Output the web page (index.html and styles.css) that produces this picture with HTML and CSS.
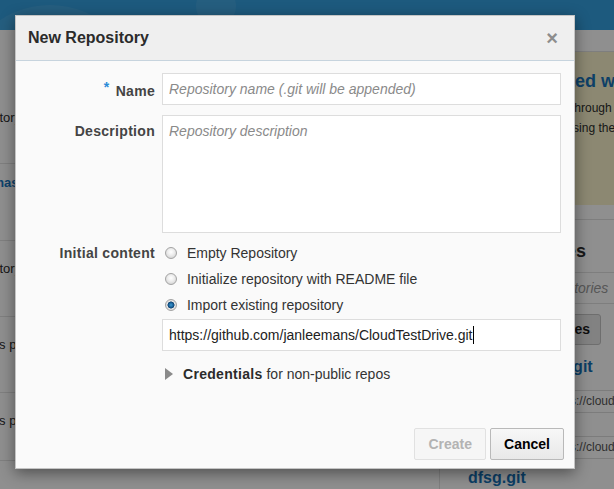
FILE: index.html
```html
<!DOCTYPE html>
<html lang="en">
<head>
<meta charset="utf-8">
<title>New Repository</title>
<link rel="stylesheet" href="styles.css">
</head>
<body>
<div class="page">
  <header class="topbar">
    <span class="bubble bubble-a"></span>
    <span class="bubble bubble-b"></span>
  </header>
  <main class="content">
    <section class="list">
      <div class="list-row row-1"><span class="row-text shift-a">Repository for the demo</span></div>
      <div class="list-row row-2"><span class="row-link shift-b">Christmas app</span></div>
      <div class="list-row row-3"><span class="row-text shift-a">Repository of samples</span></div>
      <div class="list-row row-4"><span class="row-text shift-c">This project holds code</span></div>
      <div class="list-row row-5"><span class="row-text shift-c">This project holds code</span></div>
      <div class="list-row row-6"></div>
    </section>
    <aside class="side">
      <div class="side-top"></div>
      <div class="welcome">
        <h2 class="welcome-title">Get started with Git</h2>
        <p class="welcome-text">Click to walk through the steps<br>repositories using the wizard</p>
      </div>
      <div class="side-gap"></div>
      <h3 class="side-heading">Repositories</h3>
      <div class="side-search">Filter repositories</div>
      <div class="side-actions"><span class="side-button">Repositories</span></div>
      <div class="repo">
        <div class="repo-name name-1">demo.git</div>
        <div class="repo-url url-1">https://cloud.oracle.com/demo.git</div>
      </div>
      <div class="repo">
        <div class="repo-name name-2">a.git</div>
        <div class="repo-url url-2">https://cloud.oracle.com/a.git</div>
      </div>
      <div class="repo">
        <div class="repo-name name-3">dfsg.git</div>
      </div>
    </aside>
  </main>
</div>

<div class="backdrop"></div>

<div class="dialog" role="dialog" aria-labelledby="dlg-title">
  <div class="dlg-head">
    <h1 class="dlg-title" id="dlg-title">New Repository</h1>
    <span class="dlg-close">&times;</span>
  </div>
  <form class="dlg-body">
    <label class="field-label label-center" for="repo-name"><span class="req">*</span> Name</label>
    <input class="text-input" id="repo-name" type="text" placeholder="Repository name (.git will be appended)">

    <label class="field-label label-top" for="repo-desc">Description</label>
    <textarea class="text-area" id="repo-desc" placeholder="Repository description"></textarea>

    <div class="field-label label-init">Initial content</div>
    <div class="options">
      <label class="option"><input class="radio" type="radio" name="init"> Empty Repository</label>
      <label class="option"><input class="radio" type="radio" name="init"> Initialize repository with README file</label>
      <label class="option option-last"><input class="radio" type="radio" name="init" checked> Import existing repository</label>
      <div class="text-input url-field">https://github.com/janleemans/CloudTestDrive.git<span class="caret"></span></div>
      <div class="creds"><span class="tri"></span><b>Credentials</b>&nbsp;for non-public repos</div>
    </div>
  </form>
  <div class="dlg-foot">
    <button class="btn btn-disabled" type="button" disabled>Create</button>
    <button class="btn btn-default" type="button">Cancel</button>
  </div>
</div>
</body>
</html>
```

FILE: styles.css
```css
html, body {
  margin: 0;
  padding: 0;
}
body {
  width: 614px;
  height: 489px;
  overflow: hidden;
  font-family: "Liberation Sans", Arial, sans-serif;
  font-size: 14px;
  color: #333;
  background: #fff;
  position: relative;
}

/* ---------- underlying page ---------- */
.page {
  width: 614px;
  height: 489px;
  display: flex;
  flex-direction: column;
}
.topbar {
  height: 30px;
  flex: none;
  background: #34a1e0;
  position: relative;
  overflow: hidden;
}
.bubble {
  position: absolute;
  border-radius: 50%;
  background: rgba(255, 255, 255, 0.08);
}
.bubble-a {
  width: 180px;
  height: 180px;
  left: -40px;
  top: 5px;
}
.bubble-b {
  width: 40px;
  height: 40px;
  left: 196px;
  top: -14px;
}
.content {
  flex: 1;
  display: grid;
  grid-template-columns: 439px 1fr;
  overflow: hidden;
}
.list {
  display: flex;
  flex-direction: column;
  overflow: hidden;
}
.list-row {
  border-bottom: 1px solid #e2e2e2;
  box-sizing: border-box;
  font-size: 13px;
  line-height: 18px;
  white-space: nowrap;
}
.row-1 { height: 134px; padding-top: 79px; }
.row-2 { height: 77px; padding-top: 10px; }
.row-3 { height: 76px; padding-top: 19px; }
.row-4 { height: 76px; padding-top: 19px; }
.row-5 { height: 68px; padding-top: 19px; }
.row-6 { flex: 1; border-bottom: 0; }
.row-text { color: #2c2c2c; display: block; }
.row-link { color: #1877c2; font-weight: bold; display: block; }
.shift-a { margin-left: -41px; }
.shift-b { margin-left: -45px; }
.shift-c { margin-left: -19px; }

.side {
  border-left: 1px solid #e2e2e2;
  display: flex;
  flex-direction: column;
  white-space: nowrap;
  overflow: hidden;
}
.side-top {
  height: 21px;
  border-bottom: 1px solid #e0e0e0;
}
.welcome {
  height: 155px;
  background: #f9f2cb;
  padding-left: 61px;
  box-sizing: border-box;
  padding-top: 18px;
}
.welcome-title {
  margin: 0;
  font-size: 18px;
  line-height: 22px;
  color: #1872b8;
}
.welcome-text {
  margin: 6px 0 0;
  font-size: 12px;
  line-height: 20px;
  color: #2c2c2c;
}
.side-gap {
  height: 14px;
  border-bottom: 1px solid #e0e0e0;
}
.side-heading {
  margin: 0;
  height: 54px;
  box-sizing: border-box;
  padding: 20px 0 0 37px;
  font-size: 18px;
  line-height: 22px;
  color: #2c2c2c;
  border-bottom: 1px solid #e0e0e0;
}
.side-search {
  height: 31px;
  box-sizing: border-box;
  padding: 6px 0 0 61px;
  font-style: italic;
  color: #9a9a9a;
  font-size: 14px;
  line-height: 18px;
  border-bottom: 1px solid #e0e0e0;
}
.side-actions {
  display: flex;
  justify-content: flex-end;
  padding: 10px 13px 0 0;
}
.side-button {
  height: 31px;
  box-sizing: border-box;
  padding: 0 10px;
  border: 1px solid #c4c4c4;
  border-radius: 3px;
  background: #e8e8e8;
  font-weight: bold;
  font-size: 14px;
  line-height: 29px;
  color: #1a1a1a;
}
.repo-name {
  font-weight: bold;
  font-size: 16px;
  line-height: 22px;
  color: #1570b6;
  padding-left: 28px;
}
.name-1 { padding-top: 11px; padding-left: 86px; }
.name-2 { height: 23px; }
.name-3 { padding-top: 8px; }
.repo-url {
  height: 23px;
  box-sizing: border-box;
  border-top: 1px solid #dedede;
  border-bottom: 1px solid #dedede;
  font-size: 12px;
  line-height: 21px;
  color: #555;
  padding-left: 110px;
}
.url-1 { margin-top: 12px; }

.backdrop {
  position: absolute;
  inset: 0;
  background: rgba(0, 0, 0, 0.44);
}

/* ---------- dialog ---------- */
.dialog {
  position: absolute;
  left: 15px;
  top: 15px;
  width: 560px;
  box-sizing: border-box;
  background: #fafafa;
  border: 1px solid #c4c4c4;
  box-shadow: 0 4px 14px rgba(0, 0, 0, 0.45);
}
.dlg-head {
  height: 45px;
  box-sizing: border-box;
  background: #efefef;
  border-bottom: 1px solid #c7d4de;
  display: flex;
  align-items: center;
  justify-content: space-between;
  padding: 0 16px 0 12px;
}
.dlg-title {
  margin: 0;
  font-size: 16px;
  font-weight: bold;
  color: #2b2b2b;
}
.dlg-close {
  font-size: 20px;
  font-weight: bold;
  color: #8d8d8d;
  line-height: 1;
}
.dlg-body {
  margin: 0;
  display: grid;
  grid-template-columns: 139px 399px;
  column-gap: 7px;
  row-gap: 10px;
  padding-top: 12px;
}
.field-label {
  text-align: right;
  font-weight: bold;
  font-size: 14px;
  line-height: 18px;
  letter-spacing: 0.3px;
  color: #444;
}
.label-center { align-self: center; }
.label-top { align-self: start; padding-top: 7px; }
.label-init { align-self: start; margin-top: 1px; }
.req {
  color: #2b8ad8;
  font-size: 14px;
  vertical-align: 4px;
  margin-right: 2px;
}
.text-input {
  height: 32px;
  box-sizing: border-box;
  border: 1px solid #dddddd;
  background: #fff;
  padding: 0 6px;
  font-family: inherit;
  font-size: 14px;
  color: #222;
  outline: none;
  margin: 0;
}
.text-area {
  height: 118px;
  box-sizing: border-box;
  border: 1px solid #dddddd;
  background: #fff;
  padding: 7px 6px;
  font-family: inherit;
  font-size: 14px;
  line-height: 17px;
  resize: none;
  outline: none;
  margin: 0;
}
.text-input::placeholder,
.text-area::placeholder {
  color: #8a8a8a;
  font-style: italic;
}
.options {
  display: flex;
  flex-direction: column;
  margin-top: 1px;
}
.option {
  display: flex;
  align-items: center;
  height: 18px;
  margin-bottom: 8px;
  font-size: 14px;
  color: #333;
  white-space: pre;
}
.option-last { margin-bottom: 5px; }
.radio {
  appearance: none;
  -webkit-appearance: none;
  width: 12px;
  height: 12px;
  margin: 0 6px 0 3px;
  border-radius: 50%;
  border: 1px solid #a3a3a3;
  background: radial-gradient(circle at 50% 40%, #ffffff 0, #eeeeee 40%, #c9c9c9 100%);
  box-sizing: border-box;
  flex: none;
}
.radio:checked {
  background: radial-gradient(circle at 50% 50%, #3d9bd3 0, #14588f 2.5px, #0c3f6c 3.2px, #e6e6e6 3.8px, #cdcdcd 100%);
}
.url-field {
  display: flex;
  align-items: center;
  line-height: 18px;
}
.caret {
  display: inline-block;
  width: 1px;
  height: 18px;
  background: #000;
  margin-left: 1px;
}
.creds {
  display: flex;
  align-items: center;
  height: 18px;
  margin-top: 14px;
  font-size: 14px;
  color: #333;
}
.creds b { color: #2b2b2b; letter-spacing: 0.3px; }
.tri {
  width: 0;
  height: 0;
  border-left: 8px solid #8a8a8a;
  border-top: 6px solid transparent;
  border-bottom: 6px solid transparent;
  margin: 0 10px 0 3px;
}
.dlg-foot {
  display: flex;
  justify-content: flex-end;
  gap: 4px;
  padding: 45px 10px 8px 0;
}
.btn {
  height: 32px;
  box-sizing: border-box;
  padding: 0 13px;
  font-family: inherit;
  font-weight: bold;
  font-size: 14px;
  border-radius: 2px;
  margin: 0;
}
.btn-disabled {
  color: #b3b3b3;
  background: #f6f6f6;
  border: 1px solid #e1e1e1;
}
.btn-default {
  color: #000;
  background: linear-gradient(#f7f7f7, #e8e8e8);
  border: 1px solid #b9b9b9;
}
```
